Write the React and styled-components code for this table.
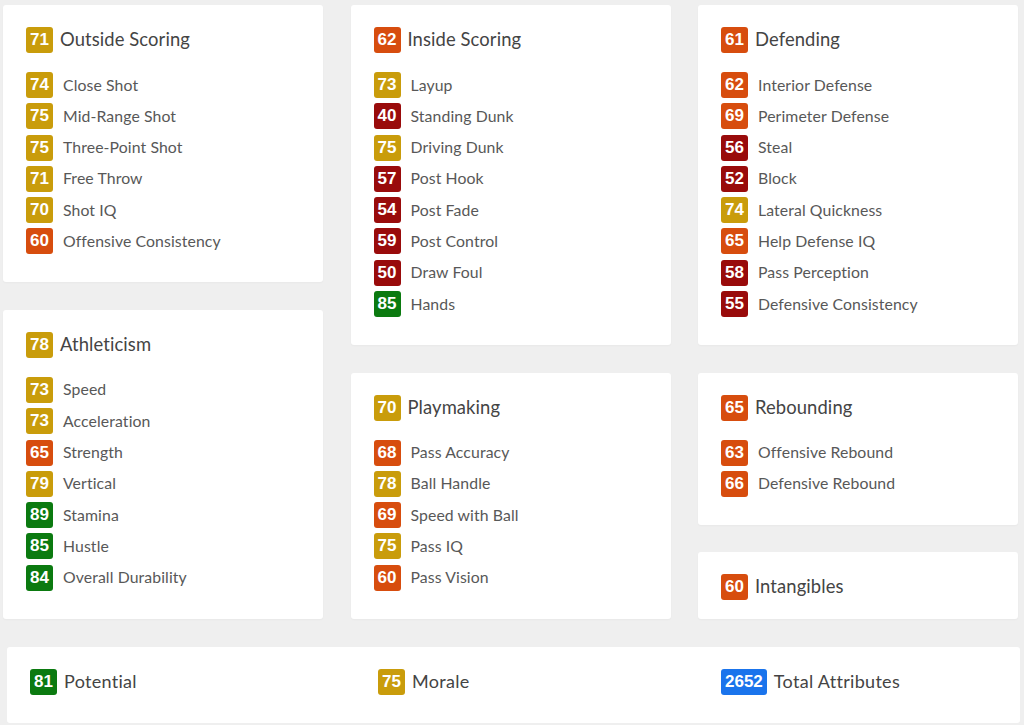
import React from 'react';
import styled, { createGlobalStyle } from 'styled-components';

const colors = {
    gold: '#c99c0b',
    orange: '#d74d0e',
    red: '#990b0b',
    green: '#0b7a10',
    blue: '#1a74ec',
};

const tier = (value) => {
    if (value >= 1000) return colors.blue;
    if (value >= 80) return colors.green;
    if (value >= 70) return colors.gold;
    if (value >= 60) return colors.orange;
    return colors.red;
};

const GlobalStyle = createGlobalStyle`
    html, body {
        margin: 0;
        padding: 0;
        background: #efefef;
    }
    body {
        font-family: Lato, "Open Sans", "Liberation Sans", sans-serif;
        color: #555;
    }
`;

const Page = styled.div`
    width: 1024px;
    box-sizing: border-box;
    padding: 5px 6px 0 3px;
`;

const Columns = styled.div`
    display: flex;
    justify-content: space-between;
    align-items: flex-start;
`;

const Column = styled.div`
    width: 320px;
    display: flex;
    flex-direction: column;
    gap: 27.5px;
`;

const Card = styled.section`
    background: #fff;
    border-radius: 3px;
    box-shadow: 0 1px 2px rgba(0, 0, 0, 0.03);
    padding: 22px 23px 0;
`;

const Header = styled.div`
    display: flex;
    align-items: center;
    gap: 7px;
    margin-bottom: 19px;
`;

const Title = styled.h3`
    margin: 0 0 2px;
    font-size: 18.4px;
    font-weight: 400;
    color: #444;
    letter-spacing: 0.1px;
`;

const Badge = styled.span`
    display: inline-block;
    box-sizing: border-box;
    min-width: 27px;
    height: 26px;
    line-height: 26px;
    padding: 0 4px;
    border-radius: 3px;
    background: ${ props => props.$color };
    color: #fff;
    font-family: "Liberation Sans", Arial, sans-serif;
    font-weight: bold;
    font-size: 17px;
    text-align: center;
`;

const List = styled.ul`
    list-style: none;
    margin: 0;
    padding: 0 0 28px;
    display: flex;
    flex-direction: column;
    gap: 5.3px;
`;

const Row = styled.li`
    display: flex;
    align-items: center;
    gap: 10px;
    height: 26px;
`;

const Label = styled.span`
    margin-bottom: 2px;
    font-size: 15.8px;
    color: #585858;
    letter-spacing: 0.1px;
`;

const SummaryCard = styled.section`
    margin: 27.5px -2px 0 4px;
    background: #fff;
    border-radius: 3px;
    padding: 22px 23px 28px;
    display: grid;
    grid-template-columns: 348px 343px 1fr;
`;

const SummaryItem = styled.div`
    display: flex;
    align-items: center;
    gap: 7px;
`;

const SummaryLabel = styled.span`
    margin-bottom: 1px;
    font-size: 18px;
    color: #444;
    letter-spacing: 0.3px;
`;

const Category = ({ title, value, items = [] }) => (
    <Card>
        <Header>
            <Badge $color={ tier(value) }>{ value }</Badge>
            <Title>{ title }</Title>
        </Header>
        { items.length > 0 &&
            <List>
                { items.map(([label, v]) => (
                    <Row key={ label }>
                        <Badge $color={ tier(v) }>{ v }</Badge>
                        <Label>{ label }</Label>
                    </Row>
                )) }
            </List>
        }
    </Card>
);

const columns = [
    [
        { title: 'Outside Scoring', value: 71, items: [
            ['Close Shot', 74], ['Mid-Range Shot', 75], ['Three-Point Shot', 75],
            ['Free Throw', 71], ['Shot IQ', 70], ['Offensive Consistency', 60],
        ] },
        { title: 'Athleticism', value: 78, items: [
            ['Speed', 73], ['Acceleration', 73], ['Strength', 65], ['Vertical', 79],
            ['Stamina', 89], ['Hustle', 85], ['Overall Durability', 84],
        ] },
    ],
    [
        { title: 'Inside Scoring', value: 62, items: [
            ['Layup', 73], ['Standing Dunk', 40], ['Driving Dunk', 75], ['Post Hook', 57],
            ['Post Fade', 54], ['Post Control', 59], ['Draw Foul', 50], ['Hands', 85],
        ] },
        { title: 'Playmaking', value: 70, items: [
            ['Pass Accuracy', 68], ['Ball Handle', 78], ['Speed with Ball', 69],
            ['Pass IQ', 75], ['Pass Vision', 60],
        ] },
    ],
    [
        { title: 'Defending', value: 61, items: [
            ['Interior Defense', 62], ['Perimeter Defense', 69], ['Steal', 56], ['Block', 52],
            ['Lateral Quickness', 74], ['Help Defense IQ', 65], ['Pass Perception', 58],
            ['Defensive Consistency', 55],
        ] },
        { title: 'Rebounding', value: 65, items: [
            ['Offensive Rebound', 63], ['Defensive Rebound', 66],
        ] },
        { title: 'Intangibles', value: 60 },
    ],
];

const summary = [
    ['Potential', 81, colors.green],
    ['Morale', 75, colors.gold],
    ['Total Attributes', 2652, colors.blue],
];

export default function App() {
    return (
        <Page>
            <GlobalStyle />
            <Columns>
                { columns.map((cards, i) => (
                    <Column key={ i }>
                        { cards.map(card => <Category key={ card.title } { ...card } />) }
                    </Column>
                )) }
            </Columns>
            <SummaryCard>
                { summary.map(([label, value, color]) => (
                    <SummaryItem key={ label }>
                        <Badge $color={ color }>{ value }</Badge>
                        <SummaryLabel>{ label }</SummaryLabel>
                    </SummaryItem>
                )) }
            </SummaryCard>
        </Page>
    );
}
